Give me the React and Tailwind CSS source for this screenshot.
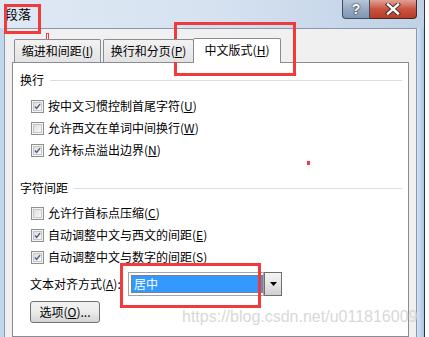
import React from "react";

const F = "font-['Noto_Sans_CJK_SC','Noto_Sans',sans-serif]";

function Check({ checked }) {
  return (
    <span className="w-[13px] h-[13px] border border-[#8e8f8f] bg-[#f4f4f4] flex items-center justify-center shrink-0">
      <span className="w-[9px] h-[9px] border border-[#c6c6c6] bg-gradient-to-br from-[#dcdcdc] to-[#fbfbfb] flex items-center justify-center">
        {checked && (
          <svg width="9" height="9" viewBox="0 0 9 9">
            <path d="M1.2 4.6 L3.4 7 L7.8 1.4" fill="none" stroke="#4a5c8a" strokeWidth="1.8" />
          </svg>
        )}
      </span>
    </span>
  );
}

function Row({ checked, text, k }) {
  return (
    <div className="h-[22px] flex items-center gap-[4px]">
      <Check checked={checked} />
      <span className="text-[12px] leading-[14px] text-black whitespace-nowrap">
        {text}(<span className="underline underline-offset-1">{k}</span>)
      </span>
    </div>
  );
}

function Group({ label }) {
  return (
    <div className="h-[16px] flex items-center pl-[7px] pr-[6px]">
      <span className="text-[12px] leading-[14px] text-black whitespace-nowrap">{label}</span>
      <span className="flex-1 h-px bg-[#d5dfe5] ml-[6px]" />
    </div>
  );
}

export default function App() {
  return (
    <div className={`w-[429px] h-[337px] overflow-hidden relative bg-white ${F}`}>
      <div className="flex h-full">
        <div className="w-[425px] h-full flex flex-col bg-gradient-to-r from-[#dfe9f5] via-[#d6e2f0] to-[#bfd1e6] border-r border-[#2e3440]">
          {/* title bar */}
          <div className="h-[28px] flex items-start justify-between shrink-0">
            <span className="pt-[6px] pl-[5px] text-[13px] leading-[16px] text-black">段落</span>
            <div className="flex mr-[7px]">
              <div className="w-[28px] h-[19px] border border-t-0 border-[#3f4c63] rounded-bl-[4px] bg-gradient-to-b from-[#b7c6d9] via-[#98aac2] to-[#7f95b2] flex items-center justify-center">
                <span className="text-[14px] leading-[14px] font-bold text-white [text-shadow:0_0_1px_#222,0_0_2px_#333] font-['Liberation_Sans',sans-serif]">?</span>
              </div>
              <div className="w-[47px] h-[19px] border border-t-0 border-l-0 border-[#3f2a28] rounded-br-[4px] bg-gradient-to-b from-[#e0a195] via-[#c9533f] to-[#b83c28] flex items-center justify-center">
                <svg width="16" height="12" viewBox="0 0 16 12">
                  <path d="M3 1.5 L13 10.5 M13 1.5 L3 10.5" stroke="#3a2a2a" strokeWidth="4.2" strokeLinecap="square" />
                  <path d="M3 1.5 L13 10.5 M13 1.5 L3 10.5" stroke="#ffffff" strokeWidth="2.4" strokeLinecap="square" />
                </svg>
              </div>
            </div>
          </div>
          {/* body */}
          <div className="flex-1 flex min-h-0">
            <div className="w-[4px] bg-[#c2d6ed] shrink-0" />
            <div className="flex-1 border-l border-t border-r border-[#8c99ab] bg-[#f0f0f0] pt-[9px] px-[7px] flex flex-col min-h-0">
              {/* tabs */}
              <div className="flex items-end pl-[2px] h-[24px] shrink-0 relative z-10">
                <div className="w-[87px] h-[23px] border border-b-0 border-[#898c95] rounded-t-[2px] bg-gradient-to-b from-[#f2f2f2] to-[#e3e3e3] flex items-center justify-center">
                  <span className="text-[12px] leading-[14px] text-black whitespace-nowrap">缩进和间距(<span className="underline">I</span>)</span>
                </div>
                <div className="ml-[2px] w-[91px] h-[23px] border border-b-0 border-[#898c95] rounded-t-[2px] bg-gradient-to-b from-[#f2f2f2] to-[#e3e3e3] flex items-center justify-center">
                  <span className="text-[12px] leading-[14px] text-black whitespace-nowrap">换行和分页(<span className="underline">P</span>)</span>
                </div>
                <div className="-ml-[1px] w-[88px] h-[25px] -mb-[1px] border border-b-0 border-[#898c95] rounded-t-[2px] bg-white flex items-center justify-center pb-[2px]">
                  <span className="text-[12px] leading-[14px] text-black whitespace-nowrap">中文版式(<span className="underline">H</span>)</span>
                </div>
              </div>
              {/* panel */}
              <div className="flex-1 border border-[#898c95] bg-white flex flex-col">
                <div className="mt-[9px]"><Group label="换行" /></div>
                <div className="mt-[7px] pl-[18px] flex flex-col">
                  <Row checked text="按中文习惯控制首尾字符" k="U" />
                  <Row checked={false} text="允许西文在单词中间换行" k="W" />
                  <Row checked text="允许标点溢出边界" k="N" />
                </div>
                <div className="mt-[19px]"><Group label="字符间距" /></div>
                <div className="mt-[6px] pl-[18px] flex flex-col">
                  <Row checked={false} text="允许行首标点压缩" k="C" />
                  <Row checked text="自动调整中文与西文的间距" k="E" />
                  <Row checked text="自动调整中文与数字的间距" k="S" />
                </div>
                <div className="mt-[4px] pl-[17px] flex items-center h-[24px]">
                  <span className="w-[98px] text-[12px] leading-[14px] text-black whitespace-nowrap">文本对齐方式(<span className="underline">A</span>):</span>
                  <div className="flex h-[24px]">
                    <div className="w-[136px] h-full border border-[#a5a5a5] bg-white p-[2px] pr-0">
                      <div className="h-full border border-dotted border-[#b0702a] bg-[#3399ff] flex items-center pl-[2px]">
                        <span className="text-[12px] leading-[14px] text-white">居中</span>
                      </div>
                    </div>
                    <div className="w-[18px] h-full border border-[#6f6f6f] bg-gradient-to-b from-[#f4f4f4] via-[#e6e6e6] to-[#cfcfcf] flex items-center justify-center">
                      <svg width="7" height="4" viewBox="0 0 7 4"><path d="M0 0 H7 L3.5 4 Z" fill="#000" /></svg>
                    </div>
                  </div>
                </div>
                <div className="mt-[5px] ml-[17px] w-[70px] h-[22px] border border-[#707070] rounded-[3px] bg-gradient-to-b from-[#f2f2f2] via-[#ebebeb] to-[#d4d4d4] flex items-center justify-center shrink-0">
                  <span className="text-[12px] leading-[14px] text-black whitespace-nowrap">选项(<span className="underline">O</span>)...</span>
                </div>
              </div>
            </div>
            <div className="w-[7px] bg-gradient-to-r from-[#d3e2f2] to-[#a9c6e6] shrink-0" />
          </div>
        </div>
        <div className="flex-1 bg-white" />
      </div>

      {/* watermark */}
      <span className="absolute left-[182px] top-[308px] text-[16px] leading-[18px] text-[#d8d8d8] font-['Liberation_Sans',sans-serif] whitespace-nowrap">https://blog.csdn.net/u011816009</span>

      {/* red annotation boxes */}
      <div className="absolute left-[4px] top-[4px] w-[37px] h-[30px] border-[3px] border-[#f23a3a]" />
      <div className="absolute left-[174px] top-[22px] w-[122px] h-[54px] border-[3px] border-[#f23a3a]" />
      <div className="absolute left-[120px] top-[263px] w-[141px] h-[45px] border-[3px] border-[#f23a3a]" />
      <div className="absolute left-[46px] top-[33px] w-[3px] h-[10px] border border-[#f23a3a] bg-white" />
      <div className="absolute left-[307px] top-[161px] w-[3px] h-[4px] bg-[#f23a3a]" />
    </div>
  );
}
